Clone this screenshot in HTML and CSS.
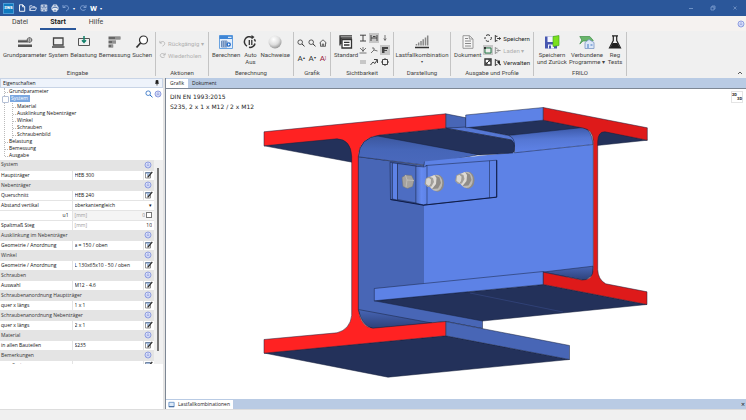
FILE: index.html
```html
<!DOCTYPE html>
<html lang="de">
<head>
    <meta charset="UTF-8">
    <meta name="viewport" content="width=device-width, initial-scale=1.0">
    <title>Stahlbau Anschluss</title>
    <link rel="stylesheet" href="styles.css">
</head>

<body>
    <!-- shared icons -->
    <svg class="sprite" aria-hidden="true">
        <symbol id="edit" viewBox="0 0 8 8">
            <path d="M.5 1.5h5v5.500h-5z" fill="#fff" stroke="#777" stroke-width=".8"/>
            <path d="M.5 2h5M2 4h2" stroke="#4c79b8"/>
            <path d="M7.300.8 3.500 5.500l-1 .8" stroke="#333" stroke-width="1.300" fill="none"/>
        </symbol>
        <symbol id="fold" viewBox="0 0 8 8">
            <circle cx="4" cy="4" r="3" fill="#dfe5fb" stroke="#8f9de0"/>
            <path d="M2.500 4 4 2.600 5.500 4M2.500 5.600 4 4.200l1.500 1.400" fill="none" stroke="#7c8bd6" stroke-width=".7"/>
        </symbol>
        <symbol id="undo" viewBox="0 0 8 8">
            <path d="M1 1v2.500h2.500M1.300 3.300C3 .8 6.800 1.500 6.500 4.200 6.300 5.800 5 6.500 4 7" fill="none" stroke="currentColor" stroke-width=".9"/>
        </symbol>
        <symbol id="redo" viewBox="0 0 8 8">
            <path d="M7 1v2.500H4.500M6.700 3.300C5 .8 1.200 1.500 1.500 4.200 1.800 6.500 5 7 6.500 5.500" fill="none" stroke="currentColor" stroke-width=".9"/>
        </symbol>
        <symbol id="lens" viewBox="0 0 8 8">
            <circle cx="3.200" cy="3.200" r="2.300" fill="none" stroke="currentColor" stroke-width=".8"/>
            <path d="m5 5 2.500 2.300" stroke="currentColor" stroke-width="1"/>
        </symbol>
    </svg>

    <header class="titlebar">
        <span class="logo">SW8</span>
        <button type="button" class="quick" aria-label="Neu"><svg viewBox="0 0 8 8"><path d="M1.500.8h3.300l1.900 1.900v4.600H1.500zM4.600.8v2h2" fill="none" stroke="#fff" stroke-width=".9"/></svg></button>
        <button type="button" class="quick" aria-label="Öffnen"><svg viewBox="0 0 8 8"><path d="M.8 6.500V1.800h2.300l.8.900H6v1M.8 6.500l1.200-2.700h5.500L6.400 6.500z" fill="none" stroke="#e8eefa" stroke-width=".8"/></svg></button>
        <button type="button" class="quick" aria-label="Speichern"><svg viewBox="0 0 8 8"><path d="M1.200 1h5.600v6H1.200zM2.300 1v2h3.400V1M1.200 4.300h5.600M2.500 7V5.300h3V7" fill="none" stroke="#fff" stroke-width=".7"/></svg></button>
        <button type="button" class="quick" aria-label="Drucken"><svg viewBox="0 0 8 8"><path d="M2.200 2.500V1h3.600v1.500M1 2.800h6v2.900H1zM2.200 4.500h3.600v2.700H2.200z" fill="none" stroke="#fff" stroke-width=".9"/></svg></button>
        <button type="button" class="quick pale" aria-label="Rückgängig"><svg><use href="#undo"/></svg></button>
        <span class="dot">▾</span>
        <button type="button" class="quick pale" aria-label="Wiederholen"><svg><use href="#redo"/></svg></button>
        <button type="button" class="quick word">W</button>
        <span class="dot">▾</span>
        <div class="window-buttons">
            <button type="button" aria-label="Minimieren"><svg viewBox="0 0 6 6"><path d="M1 3.500h4" stroke="#7f9fd0" stroke-width=".8"/></svg></button>
            <button type="button" aria-label="Wiederherstellen"><svg viewBox="0 0 6 6"><path d="M1 2h3v3H1zM2 2V1h3v3H4" fill="none" stroke="#7f9fd0" stroke-width=".8"/></svg></button>
            <button type="button" aria-label="Schließen"><svg viewBox="0 0 6 6"><path d="m1.500 1.500 3 3m0-3-3 3" stroke="#7f9fd0" stroke-width=".7"/></svg></button>
        </div>
    </header>

    <nav class="menu">
        <a href="#">Datei</a>
        <a href="#" class="active">Start</a>
        <a href="#">Hilfe</a>
        <button type="button" class="help" aria-label="Info"><svg><use href="#fold"/></svg></button>
    </nav>

    <section class="ribbon">
        <div class="group eingabe">
            <div class="tools">
                <button type="button" class="tool">
                    <svg viewBox="0 0 16 14"><path d="M1 5h10v2.600H1zM1 9.500h14v2.500H1z" fill="#555"/><path d="M1 5.300h9" stroke="#888"/><circle cx="12.500" cy="5" r="2.300" fill="#ddd" stroke="#666"/><path d="M12.500 2v6M9.500 5h6" stroke="#666" stroke-width=".6"/></svg>
                    Grundparameter
                </button>
                <button type="button" class="tool">
                    <svg viewBox="0 0 16 14"><path d="M3.500 3h9.500v7H3.500zM2 12h12.500" fill="none" stroke="#444" stroke-width="1.300"/></svg>
                    System
                </button>
                <button type="button" class="tool">
                    <svg viewBox="0 0 16 14"><path d="M2.500 3.500h11v7h-11z" fill="none" stroke="#555"/><path d="M8 1v6M6 5.300 8 7.500l2-2.200" fill="none" stroke="#12806a" stroke-width="1.500"/></svg>
                    Belastung
                </button>
                <button type="button" class="tool">
                    <svg viewBox="0 0 16 14"><path d="M1.500 1.500h12v3h-12zM1.500 5.500H9v3H1.500zM1.500 9.500h4.700v3H1.500z" fill="#666"/><path d="M8 3h5.500M5 7h4M4 11h2" stroke="#bbb" stroke-width="1"/></svg>
                    Bemessung
                </button>
                <button type="button" class="tool">
                    <svg viewBox="0 0 16 14"><circle cx="9.500" cy="5" r="4" fill="#fff" stroke="#333" stroke-width="1.200"/><path d="M6.500 8 2.500 12.500" stroke="#333" stroke-width="1.800"/></svg>
                    Suchen
                </button>
            </div>
            <h2>Eingabe</h2>
        </div>

        <div class="group aktionen">
            <div class="tools stack">
                <button type="button" class="row-tool" disabled><svg><use href="#undo"/></svg>Rückgängig ▾</button>
                <button type="button" class="row-tool" disabled><svg><use href="#redo"/></svg>Wiederholen</button>
            </div>
            <h2>Aktionen</h2>
        </div>

        <div class="group berechnung">
            <div class="tools">
                <button type="button" class="tool">
                    <svg viewBox="0 0 16 14"><path d="M1.500.5h13v13h-13z" fill="#e4effc" stroke="#6aa3e0"/><path d="M1.500.5h13V4h-13z" fill="#3f86d6"/><path d="M10 2.300h3.500" stroke="#fff"/><path d="M3.500 6h5.500v6H3.500zM3.500 8h5.500M3.500 10h5.500M5.300 6v6M7.200 6v6" fill="none" stroke="#456fa8" stroke-width=".7"/><circle cx="10.700" cy="9.500" r="2.300" fill="#2b70c9"/><path d="m10 8.200 2 1.300-2 1.300z" fill="#fff"/></svg>
                    Berechnen
                </button>
                <button type="button" class="tool">
                    <svg viewBox="0 0 16 14"><path d="M10 2.300A5 5 0 0 0 5 11.200M7 12.300a5 5 0 0 0 6-3.800M13.300 6.500a5 5 0 0 0-1-2.300" fill="none" stroke="#333" stroke-width="1.500"/><path d="M9.500 0v4.600L12.500 2z" fill="#333"/><path d="M7.300 5v5M9.800 5v5" stroke="#333" stroke-width="1.300"/></svg>
                    Auto<br>Aus
                </button>
                <button type="button" class="tool">
                    <svg viewBox="0 0 16 14"><defs><radialGradient id="ball" cx=".4" cy=".3" r=".7"><stop offset="0" stop-color="#fff"/><stop offset=".6" stop-color="#dedede"/><stop offset="1" stop-color="#999"/></radialGradient></defs><circle cx="8" cy="7" r="6.500" fill="url(#ball)"/></svg>
                    Nachweise
                </button>
            </div>
            <h2>Berechnung</h2>
        </div>

        <div class="group grafik">
            <div class="icon-grid wide">
                <button type="button" aria-label="Zoom"><svg><use href="#lens"/></svg></button>
                <button type="button" aria-label="Zoom Fenster"><svg><use href="#lens"/></svg></button>
                <button type="button" aria-label="Gesamtansicht"><svg viewBox="0 0 8 8"><path d="M.5 4 4 .8 7.500 4M1.500 3.500v3.800h5V3.500M3.300 7V5h1.400v2" fill="none" stroke="#444" stroke-width=".8"/></svg></button>
                <button type="button">A<sup>▴</sup></button>
                <button type="button">A<sup>▾</sup></button>
                <button type="button" class="font-red">A<sup>]</sup></button>
            </div>
            <h2>Grafik</h2>
        </div>

        <div class="group sichtbarkeit">
            <div class="tools">
                <button type="button" class="tool">
                    <svg viewBox="0 0 16 14"><path d="M2 10.500V.8h12M3 9V3h11" fill="none" stroke="#333" stroke-width="1.300"/><path d="M4 4.500h9.500v8.500H4z" fill="#fff" stroke="#333" stroke-width="1.300"/><path d="M6 7.300h5.500M6 10h5.500" stroke="#333" stroke-width="1.300"/></svg>
                    Standard
                </button>
                <div class="icon-grid">
                    <button type="button" aria-label="Profil"><svg viewBox="0 0 8 8"><path d="M1 1.200h6M4 1v6M1 7h6" stroke="#444"/></svg></button>
                    <button type="button" class="on" aria-label="Bemaßung"><svg viewBox="0 0 8 8"><path d="M1 1v6M7 1v6M1 4h6M3 2.500h2.500" stroke="#444" fill="none"/></svg></button>
                    <button type="button" aria-label="Last"><svg viewBox="0 0 8 8"><path d="M4 1v5M2.800 4.500 4 6.500l1.200-2" fill="none" stroke="#555" stroke-width=".8"/></svg></button>
                    <button type="button" aria-label="Achsen"><svg viewBox="0 0 8 8"><path d="M4 1v5M1 2l3 3 3-3M.5 7h7" fill="none" stroke="#555" stroke-width=".8"/></svg></button>
                    <button type="button" aria-label="Winkel"><svg viewBox="0 0 8 8"><path d="m1 7 3-3 3.500 1M4 4V2H2" fill="none" stroke="#555" stroke-width=".8"/></svg></button>
                    <button type="button" class="on" aria-label="Flächen"><svg viewBox="0 0 8 8"><path d="M1 1h6v2H3.500v1H6v1H3.500v2H1z" fill="#444"/></svg></button>
                    <button type="button" aria-label="Linien"><svg viewBox="0 0 8 8"><path d="M1 3h6M1 5h6" stroke="#888" stroke-width=".8"/></svg></button>
                    <button type="button" aria-label="Schnitt"><svg viewBox="0 0 8 8"><path d="m.5 7 2.500-3 2 1.500L7 2M4 1.500h3.500V5" fill="none" stroke="#444"/></svg></button>
                    <button type="button" aria-label="Rahmen"><svg viewBox="0 0 8 8"><path d="M1.500 1.500h5v5h-5zM4 0v1.500M4 6.500V8M0 4h1.500M6.500 4H8" fill="none" stroke="#444"/></svg></button>
                </div>
            </div>
            <h2>Sichtbarkeit</h2>
        </div>

        <div class="group darstellung">
            <div class="tools">
                <button type="button" class="tool">
                    <svg viewBox="0 0 16 14"><path d="M2.500 10.500V9M4.700 10.500V7.500M7 10.500V6M9.200 10.500V4.300M11.500 10.500v-8M13.700 10.500V.5" stroke="#888" stroke-width="1.500"/><path d="M1 12.500h14" stroke="#333" stroke-width="1.500"/></svg>
                    Lastfallkombination
                    <span class="arrow">▾</span>
                </button>
            </div>
            <h2>Darstellung</h2>
        </div>

        <div class="group ausgabe">
            <div class="tools">
                <button type="button" class="tool">
                    <svg viewBox="0 0 16 14"><path d="M3 .7h6.500L13 4v9.300H3zM9.300.7V4H13" fill="#f5f5f5" stroke="#999"/><path d="M5 6h6M5 8.500h6M5 11h6M5 3.500h3" stroke="#888"/></svg>
                    Dokument
                </button>
                <div class="icon-grid single">
                    <button type="button" aria-label="Aktualisieren"><svg viewBox="0 0 8 8"><path d="M2 1.500a3.200 3.200 0 0 1 4 0M7.200 3a3 3 0 0 1-.7 3M5 7.200a3 3 0 0 1-3.200-.8M1 5a3 3 0 0 1 .2-2" fill="none" stroke="#333"/></svg></button>
                    <button type="button" class="on" aria-label="Bildausschnitt"><svg viewBox="0 0 8 8"><path d="M1 2h6v5H1z" fill="#eee" stroke="#287d4a"/><path d="M0 1h2v2H0z" fill="#333"/></svg></button>
                    <button type="button" aria-label="Optionen"><svg viewBox="0 0 8 8"><path d="M1 1h6v6H1z" fill="#fff" stroke="#333" stroke-width="1.400"/><path d="m2 6 4-4M4 2h2v2M2 4v2h2" fill="none" stroke="#333"/></svg></button>
                </div>
                <div class="stack profile">
                    <button type="button" class="row-tool"><svg viewBox="0 0 8 8"><path d="M1.500 0v8M2 1.500h2M2 6.500h2M3.500 4h4M6 2.500 7.500 4 6 5.500" fill="none" stroke="#222"/></svg>Speichern</button>
                    <button type="button" class="row-tool" disabled><svg viewBox="0 0 8 8"><path d="M1.500 0v8M2 1.500h2M2 6.500h2M3.500 4h4M5 2.500 3.500 4 5 5.500" fill="none" stroke="#888"/></svg>Laden ▾</button>
                    <button type="button" class="row-tool"><svg viewBox="0 0 8 8"><path d="M1.500 0v8M2 1.500h2M2 6.500h2" fill="none" stroke="#222"/><path d="m4 3 3.500 4M4 2.500h2v2" fill="none" stroke="#222" stroke-width="1.400"/></svg>Verwalten</button>
                </div>
            </div>
            <h2>Ausgabe und Profile</h2>
        </div>

        <div class="group frilo">
            <div class="tools">
                <button type="button" class="tool">
                    <svg viewBox="0 0 16 14"><path d="M1 1.500h12v12H1z" fill="#4757b0"/><path d="M3.500 1.500h6V7h-6zM4 9.500h6v4H4z" fill="#f4f6ff"/><path d="M5 10.500h2v3H5z" fill="#4757b0"/><path d="m9 1.500 6-1v10l-6 1z" fill="#7be01e" stroke="#3c9f1c" stroke-width=".6"/></svg>
                    Speichern<br>und Zurück
                </button>
                <button type="button" class="tool">
                    <svg viewBox="0 0 16 14"><path d="M.8 1.500h10l3.500 4-3 .5H4l-3.200 3 2-4z" fill="#69b56b" stroke="#3d9048" stroke-width=".7"/><path d="M6 7.500 10 4.500l5 3v6H6z" fill="#dce7f7" stroke="#7a95c4" stroke-width=".8"/><path d="M8 9h2v4H8zM11.500 9h2v2h-2z" fill="#8fb0dd"/></svg>
                    Verbundene<br>Programme ▾
                </button>
                <button type="button" class="tool">
                    <svg viewBox="0 0 16 14"><path d="M5 .8h6M6.300 1v4.500L2.500 12.800h11L9.700 5.500V1" fill="none" stroke="#222" stroke-width="1.200"/><path d="M5.500 8h5l2.500 5H3z" fill="#222"/></svg>
                    Reg<br>Tests
                </button>
            </div>
            <h2>FRILO</h2>
        </div>
        <button type="button" class="collapse" aria-label="Menüband ausblenden"><svg viewBox="0 0 6 6"><path d="m1 4 2-2 2 2" fill="none" stroke="#333" stroke-width=".8"/></svg></button>
    </section>

    <main>
        <aside class="properties">
            <div class="panel-title">Eigenschaften<svg viewBox="0 0 6 6"><path d="M2 .5h2v2.500H2zM1 3.300h4M3 3v2.500" fill="#222" stroke="#222" stroke-width=".8"/></svg></div>

            <div class="tree">
                <ul>
                    <li><a href="#">Grundparameter</a></li>
                    <li class="open"><a href="#" class="selected">System</a>
                        <ul>
                            <li><a href="#">Material</a></li>
                            <li><a href="#">Ausklinkung Nebenträger</a></li>
                            <li><a href="#">Winkel</a></li>
                            <li><a href="#">Schrauben</a></li>
                            <li><a href="#">Schraubenbild</a></li>
                        </ul>
                    </li>
                    <li><a href="#">Belastung</a></li>
                    <li><a href="#">Bemessung</a></li>
                    <li><a href="#">Ausgabe</a></li>
                </ul>
                <div class="tree-tools">
                    <button type="button" class="search" aria-label="Suchen"><svg><use href="#lens"/></svg></button>
                    <button type="button" aria-label="Einklappen"><svg><use href="#fold"/></svg></button>
                </div>
            </div>

            <div class="sheet">
                <table>
                    <colgroup><col class="name"><col><col class="action"></colgroup>
                    <tr class="head"><th colspan="2">System</th><td><button type="button" aria-label="Einklappen"><svg><use href="#fold"/></svg></button></td></tr>
                    <tr><td><label for="haupt">Hauptträger</label></td><td><input id="haupt" value="HEB 300"></td><td><button type="button" aria-label="Bearbeiten"><svg><use href="#edit"/></svg></button></td></tr>
                    <tr class="head"><th colspan="2">Nebenträger</th><td><button type="button" aria-label="Einklappen"><svg><use href="#fold"/></svg></button></td></tr>
                    <tr><td><label for="quer">Querschnitt</label></td><td><input id="quer" value="HEB 240"></td><td><button type="button" aria-label="Bearbeiten"><svg><use href="#edit"/></svg></button></td></tr>
                    <tr><td><label for="abstand">Abstand vertikal</label></td><td colspan="2"><div class="pick"><select id="abstand"><option>oberkantengleich</option></select><span>▾</span></div></td></tr>
                    <tr class="off"><td class="right"><label for="u1">u1</label></td><td colspan="2"><div class="unit"><span>[mm]</span><input id="u1" value="0"><input type="checkbox" aria-label="u1 vorgeben"></div></td></tr>
                    <tr><td><label for="spalt">Spaltmaß Steg</label></td><td colspan="2"><div class="unit"><span>[mm]</span><input id="spalt" value="10"></div></td></tr>
                    <tr class="head"><th colspan="2">Ausklinkung im Nebenträger</th><td><button type="button" aria-label="Einklappen"><svg><use href="#fold"/></svg></button></td></tr>
                    <tr><td><label for="geo1">Geometrie / Anordnung</label></td><td><input id="geo1" value="a = 150 / oben"></td><td><button type="button" aria-label="Bearbeiten"><svg><use href="#edit"/></svg></button></td></tr>
                    <tr class="head"><th colspan="2">Winkel</th><td><button type="button" aria-label="Einklappen"><svg><use href="#fold"/></svg></button></td></tr>
                    <tr><td><label for="geo2">Geometrie / Anordnung</label></td><td><input id="geo2" value="L 130x65x10 - 50 / oben"></td><td><button type="button" aria-label="Bearbeiten"><svg><use href="#edit"/></svg></button></td></tr>
                    <tr class="head"><th colspan="2">Schrauben</th><td><button type="button" aria-label="Einklappen"><svg><use href="#fold"/></svg></button></td></tr>
                    <tr><td><label for="auswahl">Auswahl</label></td><td><input id="auswahl" value="M12 - 4.6"></td><td><button type="button" aria-label="Bearbeiten"><svg><use href="#edit"/></svg></button></td></tr>
                    <tr class="head"><th colspan="2">Schraubenanordnung Hauptträger</th><td><button type="button" aria-label="Einklappen"><svg><use href="#fold"/></svg></button></td></tr>
                    <tr><td><label for="anz1">quer x längs</label></td><td><input id="anz1" value="1 x 1"></td><td><button type="button" aria-label="Bearbeiten"><svg><use href="#edit"/></svg></button></td></tr>
                    <tr class="head"><th colspan="2">Schraubenanordnung Nebenträger</th><td><button type="button" aria-label="Einklappen"><svg><use href="#fold"/></svg></button></td></tr>
                    <tr><td><label for="anz2">quer x längs</label></td><td><input id="anz2" value="2 x 1"></td><td><button type="button" aria-label="Bearbeiten"><svg><use href="#edit"/></svg></button></td></tr>
                    <tr class="head"><th colspan="2">Material</th><td><button type="button" aria-label="Einklappen"><svg><use href="#fold"/></svg></button></td></tr>
                    <tr><td><label for="mat">in allen Bauteilen</label></td><td><input id="mat" value="S235"></td><td><button type="button" aria-label="Bearbeiten"><svg><use href="#edit"/></svg></button></td></tr>
                    <tr class="head"><th colspan="2">Bemerkungen</th><td><button type="button" aria-label="Einklappen"><svg><use href="#fold"/></svg></button></td></tr>
                    <tr><td><label for="text">zum System</label></td><td><input id="text"></td><td><button type="button" aria-label="Bearbeiten"><svg><use href="#edit"/></svg></button></td></tr>
                </table>
                <div class="scrollbar"><span></span></div>
            </div>
        </aside>

        <section class="view">
            <nav class="tabs">
                <a href="#" class="active">Grafik</a>
                <a href="#">Dokument</a>
            </nav>

            <div class="canvas">
                <div class="caption">
                    <p>DIN EN 1993:2015</p>
                    <p>S235, 2 x 1 x M12 / 2 x M12</p>
                </div>
                <button type="button" class="mode"><span>2D</span><span>3D</span></button>

                <svg class="model" viewBox="166 90 580 309" role="img" aria-label="Trägeranschluss">
                    <defs>
                        <linearGradient id="fillet" x1=".5" y1="0" x2=".4" y2="1"><stop offset=".1" stop-color="#3c579f"/><stop offset=".5" stop-color="#4666b8"/><stop offset="1" stop-color="#4a69bd"/></linearGradient>
                        <linearGradient id="fillet2" x1="0" y1="0" x2=".1" y2="1"><stop offset=".1" stop-color="#3d5aaa"/><stop offset=".5" stop-color="#5577d4"/><stop offset="1" stop-color="#5f83e8"/></linearGradient>
                        <linearGradient id="foot" x1="0" y1="0" x2="0" y2="1"><stop offset="0" stop-color="#4866b6"/><stop offset="1" stop-color="#2c4078"/></linearGradient>
                        <linearGradient id="corner" x1="0" y1="0" x2="1" y2="0"><stop offset="0" stop-color="#4f70c6"/><stop offset=".5" stop-color="#658af0"/><stop offset="1" stop-color="#5d82e6"/></linearGradient>
                        <g id="nut">
                            <ellipse cx="4.500" cy=".8" rx="6.500" ry="8.500" fill="#8d8b88"/>
                            <ellipse cx="3" cy=".4" rx="6.300" ry="8.200" fill="#bdbab5"/>
                            <path d="m-3.500-5.500 5-2 5 2.500 1.500 5.500-3 5.500-6 .5-3.500-3.500z" fill="#8f8c88"/>
                            <path d="m-3.500-5.500 5-2 2 3-.5 6-4 5-3.500-3.500z" fill="#dedbd6"/>
                            <path d="m-7-4 3-2 4 1.500 1 4-2.500 4.500-4 .5-3-3z" fill="#a3a09b"/>
                            <path d="m-7-4 3-1 2.500 2-.5 4.500-2 2.500-3.500-2.500z" fill="#d8d5d0" stroke="#85827e" stroke-width=".5"/>
                        </g>
                    </defs>

                    <g class="edges">
                        <!-- main girder, web and lower flange -->
                        <path class="mid" d="M358 157 424 166V206L482.500 321V329L446 322 372 329 358 312z"/>
                        <path class="dark" d="M264 353.500 445.700 336.300 569.500 360 388 377.700z"/>
                        <path class="mid" d="M445.700 322 569.500 346V360L445.700 336.300z"/>
                        <path fill="url(#foot)" d="M358.300 310 432 323.500 373 329Q362 327 358.300 310z"/>

                        <!-- main girder, upper flange -->
                        <path class="dark" d="M264 146.300 352 162.700V138H330z"/>
                        <path fill="url(#fillet)" d="M358.300 157.300Q359 138 380 135.500L480 155 424 165.500z"/>

                        <!-- secondary beam -->
                        <path class="light" stroke="none" d="M424 162 593 145V268L543.300 285 424 288z"/>
                        <path class="dark" d="M466 128 543.300 120.500 592 130 508.500 136z"/>
                        <path fill="url(#fillet2)" d="M508.500 136 583 128Q592 130 593 145L514.500 153.300V145Q513 138 508.500 136z"/>

                        <!-- flange end at the cope -->
                        <path class="mid" d="M445.700 114.300 466 118.300V129L445.700 128.700z"/>
                        <path class="rim" d="M445.700 128.700 466 127.500 508.500 136Q515 138 514.500 147L511.500 140.500z"/>
                        <path class="dark" d="M445.700 128.700 511.500 140.500Q515 143 514.500 149 514.500 153 512.500 153.500L480 155.500 375 136z"/>
                        <path class="light" d="M465.700 115.500 543.300 108V120.700L465.700 128.300z"/>
                        <path class="dark" d="M597 146 647.300 140.700 603 131 597 136z"/>
                        <path class="dark" d="M374.300 301.300 543.300 285 647 305 482.500 321.500z"/>
                        <path class="light" d="M374.300 289 543.300 272V285L374.300 301.300z"/>
                        <path fill="url(#foot)" d="M543.300 272.500 593 266.700V275L585 281z"/>
                        <path class="seam" d="M470 293.500 563 312.500"/>

                        <!-- cut faces -->
                        <path class="cut" d="M264 132.300 445.700 114.300V128.700L380 135.500Q359 138 358.300 157V310Q361 328 373 328.700L445.700 322V336.300L264 353.700V340L337 333.300Q350 330 351.700 316V157Q351 140 337 139.300L264 146.300z"/>
                        <path class="cut shade" d="M543.300 108 647.300 128.300V140.700L605 132.300Q598 132 597.700 142V270Q598 280 605.700 284.300L647 292.300V305L543.300 285V272.700L582 280.500Q593 281 593.300 269V142Q593 130 583 128.500L543.300 120.700z"/>

                        <!-- angle cleat -->
                        <path class="mid" d="M390 162.700 416.500 166.700V204L390.500 200z"/>
                        <path class="light" d="M392.500 163.500 397.500 164V200.500L392.500 199.500z"/>
                        <path fill="#4d6dc2" d="M397.500 164 416.500 166.700V203.500L397.500 200z"/>
                        <path class="light" d="M426 166 496.700 160.700V197.500L423.500 205.500z"/>
                        <path fill="url(#corner)" d="M415.800 166.700 424 167.500 427 166V204.500L423.500 205.500 415.800 203.500z"/>
                        <path class="light" d="M489.500 161.200V198.300M424 166 424.500 162"/>
                        <path class="heavy" d="M390.500 200 423.500 205.700 496.700 197.700V160.700"/>
                    </g>
                    <path d="m402 178 3.500-2.500 6 .5 2.500 5-1.500 6-5 2-4.500-2z" fill="#a5a29e" stroke="#77746f" stroke-width=".5"/>
                    <path d="m405.500 175.500 1.500 5-1 7.500M407 180.500l7 .5" fill="none" stroke="#c9c6c2" stroke-width=".7"/>
                    <use href="#nut" x="433" y="183"/>
                    <use href="#nut" x="463.500" y="180"/>
                </svg>
            </div>

            <div class="tabs bottom">
                <a href="#" class="active"><svg viewBox="0 0 8 8"><path d="M1 1.500h6v5H1z" fill="#dce9f7" stroke="#6a94c8"/><path d="M1 6.500h6" stroke="#345c94"/></svg>Lastfallkombinationen</a>
                <button type="button" aria-label="Schließen">×</button>
            </div>
        </section>
    </main>

    <footer></footer>
</body>
</html>
```

FILE: styles.css
```css
* {
    margin: 0;
    padding: 0;
    box-sizing: border-box;
}

body {
    height: 100vh;
    display: flex;
    flex-direction: column;
    background-color: #f0f0f0;
    color: #222;
    font-family: Roboto, "Liberation Sans", sans-serif;
    font-size: 6px;
    line-height: 7px;
    overflow: hidden;
}

a {
    color: inherit;
    text-decoration: none;
}

button,
input,
select {
    border: 0;
    background: none;
    color: inherit;
    font: inherit;
}

svg {
    display: block;
    width: 8px;
    height: 8px;
    flex: none;
}

.sprite {
    position: absolute;
    width: 0;
    height: 0;
}

/* title bar */
.titlebar {
    height: 16px;
    display: flex;
    align-items: center;
    gap: 3px;
    padding-left: 3px;
    background-color: #2b579a;
    color: #fff;
}

.logo {
    width: 11px;
    height: 11px;
    margin-right: 1px;
    background-color: #0f7ac0;
    border: 1px solid #4b9bd6;
    font-size: 4px;
    line-height: 8px;
    font-weight: bold;
    text-align: center;
}

.pale {
    color: #86a5d6;
}

.quick.word {
    font-size: 8px;
    font-weight: bold;
}

.dot {
    width: 3px;
    font-size: 4px;
}

.window-buttons {
    display: flex;
    gap: 16px;
    margin-left: auto;
    padding-right: 8px;
}

.window-buttons svg,
.collapse svg {
    width: 6px;
    height: 6px;
}

/* menu */
.menu {
    height: 15px;
    display: flex;
    gap: 2px;
    padding-left: 2px;
    background-color: #f5f2f0;
    font-size: 7px;
    line-height: 13px;
    text-align: center;
    color: #444;
}

.menu a {
    width: 36px;
    height: 14px;
}

.menu a.active {
    border-bottom: 2px solid #2b579a;
    font-weight: bold;
    color: #222;
}

.help {
    margin-left: auto;
    padding-right: 1px;
}

/* ribbon */
.ribbon {
    height: 47px;
    display: flex;
    padding: 1px 0 2px;
}

.group {
    display: flex;
    flex-direction: column;
    justify-content: space-between;
    flex: none;
    padding: 3px 3px 0;
    border-right: 1px solid #c4c4c4;
}

.group h2 {
    font-size: 6px;
    line-height: 6px;
    font-weight: normal;
    text-align: center;
    color: #444;
}

.eingabe { width: 156px; }
.aktionen { width: 53px; }
.berechnung { width: 85px; }
.grafik { width: 37px; }
.sichtbarkeit { width: 63px; }
.darstellung { width: 57px; }
.ausgabe { width: 83px; }
.frilo { width: 93px; }

.tools {
    display: flex;
    align-items: flex-start;
    justify-content: space-between;
}

.darstellung .tools {
    justify-content: center;
}

.tool {
    display: flex;
    flex-direction: column;
    align-items: center;
    color: #444;
    white-space: nowrap;
}

.tool svg {
    width: 16px;
    height: 14px;
    margin-bottom: 2px;
}

.tool .arrow {
    font-size: 4px;
}

.stack {
    flex-direction: column;
    justify-content: flex-start;
    gap: 5px;
}

.aktionen .stack {
    padding-top: 5px;
}

.profile {
    display: flex;
}

.row-tool {
    display: flex;
    align-items: center;
    gap: 2px;
    height: 7px;
    white-space: nowrap;
}

.row-tool svg {
    width: 7px;
    height: 7px;
}

.row-tool:disabled {
    color: #b0b0b0;
}

.icon-grid {
    display: grid;
    grid-template-columns: repeat(3, 10px);
    gap: 2px 1px;
    margin-top: -2px;
}

.icon-grid button {
    height: 10px;
    display: flex;
    align-items: center;
    justify-content: center;
    color: #333;
}

.icon-grid.wide {
    gap: 5px 1px;
    justify-content: center;
    margin-top: 3px;
}

.icon-grid.wide button {
    font-size: 8px;
}

.icon-grid.single {
    grid-template-columns: 10px;
}

.icon-grid .on {
    background-color: #c6c6c6;
}

.icon-grid svg {
    width: 8px;
    height: 8px;
}

.icon-grid sup {
    font-size: 4px;
    line-height: 4px;
}

.icon-grid .font-red {
    color: #9a1738;
}

.collapse {
    margin-left: auto;
    align-self: flex-end;
    padding-right: 3px;
}

/* main area */
main {
    flex: 1;
    min-height: 0;
    display: flex;
}

.properties {
    width: 165px;
    display: flex;
    flex-direction: column;
    background-color: #fff;
    border-right: 2px solid #e4e4e4;
    font-family: "Open Sans", "Noto Sans", sans-serif;
    font-size: 5px;
    color: #111;
}

.panel-title {
    height: 10px;
    display: flex;
    align-items: center;
    justify-content: space-between;
    padding: 0 2px;
    background-color: #eef3fb;
    border: 1px solid #c8d4e6;
}

.panel-title svg {
    width: 6px;
    height: 6px;
}

.tree {
    display: flex;
    justify-content: space-between;
    height: 72px;
}

.tree ul {
    list-style: none;
}

.tree > ul {
    margin-left: 4px;
    border-left: 1px dotted #bbb;
    height: 68px;
}

.tree li a {
    display: inline-block;
    height: 7px;
    padding: 0 1px;
    vertical-align: top;
}

.tree li::before {
    content: "";
    display: inline-block;
    width: 3px;
    height: 4px;
    border-bottom: 1px dotted #bbb;
    vertical-align: top;
}

.tree li.open::before {
    width: 5px;
    height: 5px;
    margin: 1px 0 0 -3px;
    border: 1px solid #b4c0d6;
    border-radius: 1px;
    background-color: #fff;
}

.tree li ul {
    margin-left: 7px;
    border-left: 1px dotted #bbb;
}

.tree li .selected {
    width: 20px;
    margin-left: 1px;
    background-color: #7aa7e0;
    color: #fff;
}

.tree-tools {
    display: flex;
    gap: 1px;
    padding: 1px;
    height: 12px;
}

.search {
    color: #2468c0;
}

/* property table */
.sheet {
    display: flex;
    height: 204px;
    background-color: #f0f0f0;
    overflow: hidden;
}

.sheet table {
    flex: 1;
    table-layout: fixed;
    border-collapse: collapse;
    align-self: flex-start;
    background-color: #fff;
}

col.name {
    width: 72px;
}

col.action {
    width: 11px;
}

.sheet tr {
    height: 10px;
    border-bottom: 1px solid #e4e4e4;
}

.sheet td,
.sheet th {
    height: 10px;
    padding: 0 1px;
    font-weight: normal;
    text-align: left;
    white-space: nowrap;
}

.sheet td + td {
    border-left: 1px solid #e4e4e4;
}

.sheet .head {
    background-color: #e4e4e4;
    color: #333;
}

.sheet td input,
.sheet select {
    display: block;
    width: 100%;
    height: 8px;
    padding-left: 1px;
    appearance: none;
}

.sheet td svg {
    width: 8px;
    height: 8px;
}

.sheet button {
    display: block;
    height: 8px;
}

.sheet td.right {
    text-align: right;
    padding-right: 3px;
}

.pick,
.unit {
    display: flex;
    align-items: center;
    height: 8px;
    padding-right: 1px;
}

.unit span {
    color: #999;
    padding-left: 1px;
}

.sheet .unit input {
    flex: 1;
    min-width: 0;
    text-align: right;
}

.off td + td {
    background-color: #f4f4f4;
}

.off .unit {
    color: #888;
}

.sheet .unit input[type="checkbox"] {
    flex: none;
    width: 6px;
    height: 6px;
    margin-left: 1px;
    padding: 0;
    border: 1px solid #777;
    background-color: #fff;
}

.scrollbar {
    width: 9px;
    padding: 8px 3px 13px;
}

.scrollbar span {
    display: block;
    width: 2px;
    height: 100%;
    background-color: #777;
}

/* drawing view */
.view {
    flex: 1;
    min-width: 0;
    display: flex;
    flex-direction: column;
    border-left: 1px solid #7d8794;
}

.tabs {
    height: 10px;
    display: flex;
    background-color: #b9cbe4;
    font-family: "Open Sans", "Noto Sans", sans-serif;
    font-size: 5px;
    line-height: 9px;
}

.view > nav {
    height: 11px;
    padding-top: 1px;
    border-bottom: 1px solid #7d8794;
}

.tabs a {
    display: flex;
    align-items: center;
    padding: 0 4px;
}

.tabs .active {
    background-color: #fff;
}

.tabs.bottom {
    padding-top: 1px;
}

.bottom a {
    gap: 3px;
    padding: 0 3px 0 2px;
}

.bottom svg {
    width: 7px;
    height: 7px;
}

.bottom button {
    margin-left: auto;
    padding-right: 1px;
    font-size: 7px;
}

.canvas {
    position: relative;
    flex: 1;
    min-height: 0;
    background-color: #fff;
}

.caption {
    position: absolute;
    top: 3px;
    left: 4px;
    font-family: "DejaVu Sans", sans-serif;
    font-size: 6px;
    line-height: 10px;
}

.mode {
    position: absolute;
    top: 2px;
    right: 3px;
    width: 12px;
    height: 12px;
    border: 1px solid #e4e4e4;
    font-size: 4px;
    line-height: 4px;
    font-weight: bold;
}

.mode span {
    display: block;
    text-align: left;
}

.mode span + span {
    text-align: right;
}

.model {
    width: 100%;
    height: 100%;
}

.edges {
    stroke: #16203c;
    stroke-width: .5;
    stroke-linejoin: round;
}

.light { fill: #5d82e6; }
.mid { fill: #4866b6; }
.rim { fill: #5577d4; }
.dark { fill: #23315a; }
.cut { fill: #ff2222; }
.cut.shade { fill: #de1a1a; }

.seam {
    fill: none;
    stroke: #3d5090;
}

.heavy {
    fill: none;
    stroke: #0f1c48;
    stroke-width: 1;
}

footer {
    height: 11px;
    background-color: #f0f0f0;
    border-top: 1px solid #ddd;
}
```
